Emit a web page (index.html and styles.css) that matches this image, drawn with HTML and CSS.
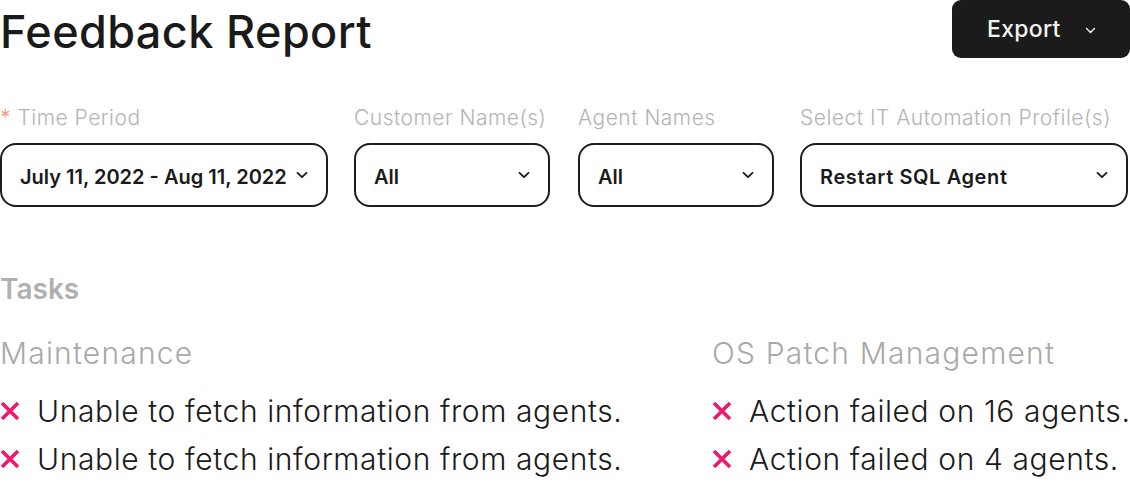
FILE: index.html
```html
<!DOCTYPE html>
<html lang="en">
<head>
<meta charset="utf-8">
<title>Feedback Report</title>
<link rel="stylesheet" href="styles.css">
</head>
<body>
<div class="page">
  <header class="top">
    <h1 class="title">Feedback Report</h1>
    <button class="export">Export
      <svg class="chev" viewBox="0 0 12 8" width="12" height="8"><path d="M1.5 1.8 6 6.2 10.5 1.8" fill="none" stroke="currentColor" stroke-width="1.6" stroke-linecap="round" stroke-linejoin="round"/></svg>
    </button>
  </header>

  <section class="filters">
    <div class="field f-wide">
      <label class="label"><span class="req">*</span> Time Period</label>
      <div class="select"><span>July 11, 2022 - Aug 11, 2022</span>
        <svg class="chev" viewBox="0 0 12 8" width="12" height="8"><path d="M1.5 1.8 6 6.2 10.5 1.8" fill="none" stroke="currentColor" stroke-width="1.8" stroke-linecap="round" stroke-linejoin="round"/></svg>
      </div>
    </div>
    <div class="field f-narrow">
      <label class="label">Customer Name(s)</label>
      <div class="select"><span>All</span>
        <svg class="chev" viewBox="0 0 12 8" width="12" height="8"><path d="M1.5 1.8 6 6.2 10.5 1.8" fill="none" stroke="currentColor" stroke-width="1.8" stroke-linecap="round" stroke-linejoin="round"/></svg>
      </div>
    </div>
    <div class="field f-narrow">
      <label class="label">Agent Names</label>
      <div class="select"><span>All</span>
        <svg class="chev" viewBox="0 0 12 8" width="12" height="8"><path d="M1.5 1.8 6 6.2 10.5 1.8" fill="none" stroke="currentColor" stroke-width="1.8" stroke-linecap="round" stroke-linejoin="round"/></svg>
      </div>
    </div>
    <div class="field f-wide">
      <label class="label">Select IT Automation Profile(s)</label>
      <div class="select"><span class="wide-text">Restart SQL Agent</span>
        <svg class="chev" viewBox="0 0 12 8" width="12" height="8"><path d="M1.5 1.8 6 6.2 10.5 1.8" fill="none" stroke="currentColor" stroke-width="1.8" stroke-linecap="round" stroke-linejoin="round"/></svg>
      </div>
    </div>
  </section>

  <h2 class="tasks">Tasks</h2>

  <section class="groups">
    <div class="group">
      <h3 class="group-title">Maintenance</h3>
      <ul class="items">
        <li class="item"><svg class="x" viewBox="0 0 20 20" width="20" height="20"><path d="M2 2 18 18M18 2 2 18" stroke="currentColor" stroke-width="3.6"/></svg>Unable to fetch information from agents.</li>
        <li class="item"><svg class="x" viewBox="0 0 20 20" width="20" height="20"><path d="M2 2 18 18M18 2 2 18" stroke="currentColor" stroke-width="3.6"/></svg>Unable to fetch information from agents.</li>
      </ul>
    </div>
    <div class="group">
      <h3 class="group-title">OS Patch Management</h3>
      <ul class="items">
        <li class="item"><svg class="x" viewBox="0 0 20 20" width="20" height="20"><path d="M2 2 18 18M18 2 2 18" stroke="currentColor" stroke-width="3.6"/></svg>Action failed on 16 agents.</li>
        <li class="item"><svg class="x" viewBox="0 0 20 20" width="20" height="20"><path d="M2 2 18 18M18 2 2 18" stroke="currentColor" stroke-width="3.6"/></svg>Action failed on 4 agents.</li>
      </ul>
    </div>
  </section>
</div>
</body>
</html>
```

FILE: styles.css
```css
* { box-sizing: border-box; }
html, body { margin: 0; padding: 0; background: #ffffff; }
body {
  font-family: "Inter", "Lato", "Noto Sans", sans-serif;
  color: #1a1a1a;
  width: 1130px;
}
.page { width: 1130px; }

.top {
  display: flex;
  justify-content: space-between;
  align-items: flex-start;
  height: 58px;
}
.title {
  margin: 0;
  padding-top: 5px;
  font-size: 45px;
  line-height: 54px;
  font-weight: 500;
  letter-spacing: 0.4px;
}
.export {
  display: flex;
  align-items: center;
  gap: 24px;
  width: 178px;
  height: 58px;
  margin: 0;
  padding: 0 0 0 35px;
  border: 0;
  border-radius: 9px;
  background: #1b1b1b;
  color: #f2f2f2;
  font-family: inherit;
  font-size: 23px;
  font-weight: 500;
  letter-spacing: 0.3px;
}
.export .chev { width: 11px; height: 7px; margin-top: 3px; }

.filters {
  display: flex;
  gap: 26px;
  margin-top: 45px;
}
.field { display: flex; flex-direction: column; gap: 10px; }
.f-wide { width: 328px; }
.f-narrow { width: 196px; }
.f-narrow + .f-narrow { margin-left: 2px; }
.label {
  font-size: 21px;
  line-height: 30px;
  font-weight: 300;
  letter-spacing: 0.5px;
  color: #b4b4b4;
  white-space: nowrap;
}
.req { color: #f0917f; }
.select {
  display: flex;
  align-items: center;
  justify-content: space-between;
  height: 64px;
  padding: 3px 18px 0 18px;
  border: 2px solid #1e1e1e;
  border-radius: 16px;
  font-size: 20px;
  font-weight: 600;
  color: #1a1a1a;
  white-space: nowrap;
}
.select .wide-text { letter-spacing: 0.6px; }
.select .chev { width: 12px; height: 8px; flex: none; margin-top: -4px; }

.tasks {
  margin: 66px 0 0;
  font-size: 28px;
  line-height: 32px;
  font-weight: 600;
  color: #b0b0b0;
}

.groups {
  display: grid;
  grid-template-columns: 712px 1fr;
  margin-top: 30px;
}
.group-title {
  margin: 0;
  font-size: 30px;
  line-height: 36px;
  font-weight: 300;
  letter-spacing: 1.2px;
  color: #a9a9a9;
}
.items {
  list-style: none;
  margin: 16px 0 0;
  padding: 0;
}
.item {
  display: flex;
  align-items: center;
  gap: 17px;
  height: 48px;
  font-size: 30px;
  font-weight: 300;
  letter-spacing: 0.6px;
  color: #1a1a1a;
  white-space: nowrap;
}
.x { color: #f0186b; width: 20px; height: 20px; flex: none; }
```
